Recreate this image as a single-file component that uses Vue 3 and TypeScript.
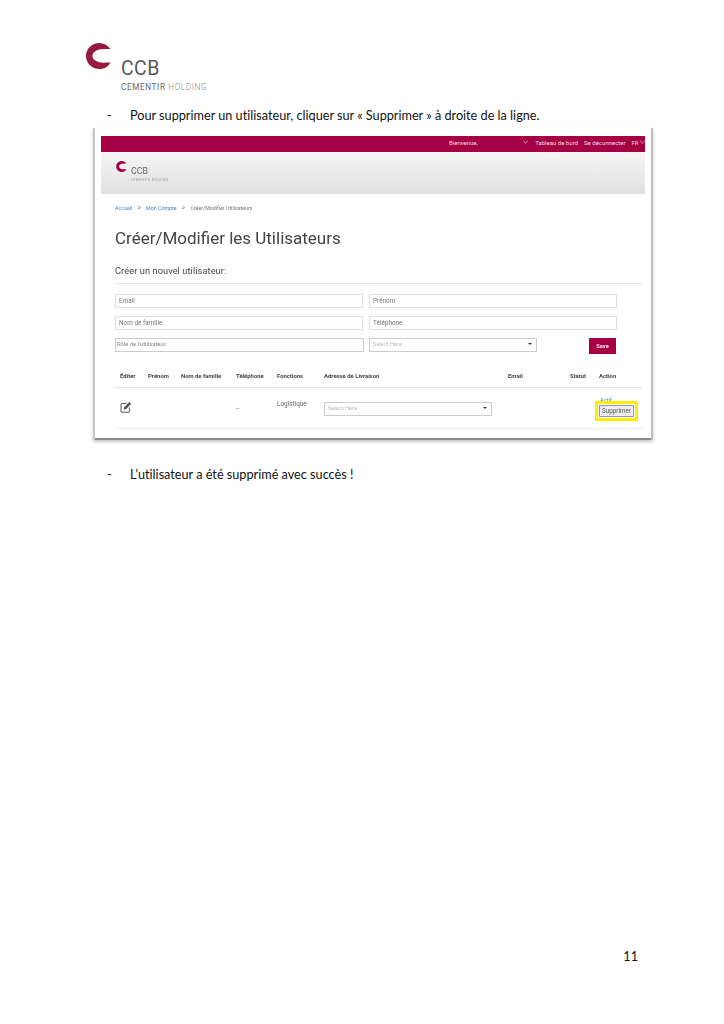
<script setup lang="ts">
const headers: [string, number][] = [
  ['Éditer', 28], ['Prénom', 33], ['Nom de famille', 55], ['Téléphone', 41], ['Fonctions', 47],
  ['Adresse de Livraison', 184], ['Email', 62], ['Statut', 29], ['Action', 43],
]
const columns = headers.map((h) => h[1] + 'px').join(' ')
const markPath = 'M24.5 6C21.5 2 17.5 0 13.5 0 5.800 0 0 5.800 0 13c0 7.200 5.800 13 13.500 13 4.500 0 8.500-2 11-6.500-3 0-6.500.5-9.500 0C10.500 18.800 6.500 16.500 6.500 13c0-3.500 3.500-6 8.500-6.700 3-.3 6.500-.3 9.500-.3z'
</script>

<template>
  <div class="page">
    <header class="brand">
      <svg class="mark" viewBox="0 0 25 26" aria-hidden="true"><path :d="markPath" /></svg>
      <div class="brand-text">
        <div class="brand-name">CCB</div>
        <div class="brand-sub"><b>CEMENTIR</b> HOLDING</div>
      </div>
    </header>

    <p class="bullet first"><span class="dash">-</span>Pour supprimer un utilisateur, cliquer sur « Supprimer » à droite de la ligne.</p>

    <section class="shot">
      <div class="topbar">
        <span class="welcome">Bienvenue,</span>
        <svg class="chev first-chev" viewBox="0 0 6 4"><path d="M.5.8 3 3.200 5.500.8" /></svg>
        <span class="nav">Tableau de bord</span>
        <span class="nav">Se déconnecter</span>
        <span class="nav">FR</span>
        <svg class="chev" viewBox="0 0 6 4"><path d="M.5.8 3 3.200 5.500.8" /></svg>
      </div>
      <div class="sitehead">
        <svg class="mini-mark" viewBox="0 0 25 26" aria-hidden="true"><path :d="markPath" /></svg>
        <div class="mini-text">
          <div class="mini-name">CCB</div>
          <div class="mini-sub">CEMENTIR HOLDING</div>
        </div>
      </div>

      <div class="content">
        <nav class="crumbs">
          <span class="crumb-link">Accueil</span><span class="sep">&gt;</span>
          <span class="crumb-link">Mon Compte</span><span class="sep">&gt;</span>
          <span>Créer/Modifier Utilisateurs</span>
        </nav>
        <h1>Créer/Modifier les Utilisateurs</h1>
        <h2>Créer un nouvel utilisateur:</h2>

        <div class="form">
          <div class="field">Email</div>
          <div class="field">Prénom</div>
          <div class="field">Nom de famille</div>
          <div class="field">Téléphone</div>
          <div class="form-last">
            <div class="field small wide">Rôle de l'utilisateur</div>
            <div class="field small select">Select Here<i class="caret"></i></div>
            <button class="save" type="button">Save</button>
          </div>
        </div>

        <div class="thead" :style="{ gridTemplateColumns: columns }">
          <span v-for="h in headers" :key="h[0]">{{ h[0] }}</span>
        </div>
        <div class="trow" :style="{ gridTemplateColumns: columns }">
          <svg class="edit" viewBox="0 0 14 14" aria-hidden="true">
            <path d="M11 7.500V12.300a.8.8 0 0 1-.8.8H2a.8.8 0 0 1-.8-.8V3.800A.8.8 0 0 1 2 3h5.500" />
            <path class="pen" d="M5.300 7.400 10.900 1.500l1.700 1.600-5.500 5.900-2.400.7z" />
          </svg>
          <span></span>
          <span></span>
          <span class="dashes">--</span>
          <span class="role">Logistique</span>
          <div class="field small row-select">Select Here<i class="caret"></i></div>
          <span></span>
          <span></span>
          <div class="action">
            <a class="active">Actif</a>
            <button class="del" type="button">Supprimer</button>
          </div>
        </div>
      </div>
    </section>

    <p class="bullet second"><span class="dash">-</span>L’utilisateur a été supprimé avec succès !</p>

    <footer class="pagenum">11</footer>
  </div>
</template>

<style>
html, body { margin: 0; background: #fff; }
</style>

<style scoped>
.page {
  width: 724px;
  height: 1024px;
  box-sizing: border-box;
  display: flex;
  flex-direction: column;
  background: #fff;
  font-family: Lato, "Open Sans", sans-serif;
  overflow: hidden;
}
.brand { display: flex; padding: 43px 0 0 86px; height: 52px; box-sizing: content-box; }
.mark { width: 25px; height: 26px; fill: #97193f; flex: none; }
.brand-text { margin: 16px 0 0 10px; color: #58595b; }
.brand-name { font: 400 19.500px/20px Roboto, sans-serif; letter-spacing: .4px; }
.brand-sub { font: 300 8.200px/11px Roboto, sans-serif; letter-spacing: .62px; color: #888; margin-top: 3px; white-space: nowrap; }
.brand-sub b { font-weight: 400; color: #666; }

.bullet {
  margin: 0;
  display: flex;
  font-size: 12.680px;
  line-height: 16px;
  color: #111;
  font-variant-ligatures: none;
}
.dash { width: 23px; margin-left: 107px; }
.first { margin-top: 12px; }
.second { margin-top: 26px; }

.shot {
  width: 544px;
  margin: 5px 0 0 93px;
  padding: 8px 8px 0;
  height: 304px;
  box-sizing: content-box;
  background: #fff;
  box-shadow: inset 2px 0 0 #c8c8c8, inset -2px 0 0 #bdbdbd, inset 0 -2px 0 #8c8c8c, 0 2px 3px rgba(0,0,0,.22);
  font-family: Roboto, sans-serif;
  filter: blur(.25px);
}
.topbar {
  height: 16px;
  box-sizing: border-box;
  padding-bottom: 4px;
  background: #a50044;
  color: #f4dce6;
  display: flex;
  align-items: center;
  font-size: 6px;
  font-weight: 400;
  white-space: nowrap;
}
.welcome { margin-left: 348px; }
.chev { width: 5px; height: 4px; flex: none; fill: none; stroke: #f4dce6; stroke-width: .9; margin-left: 1px; }
.first-chev { margin-left: 45.500px; margin-right: 2px; }
.nav { margin-left: 6px; }
.first-chev + .nav { margin-left: 5px; }
.sitehead {
  height: 42px;
  background: linear-gradient(#f6f6f6, #e0e0e0);
  display: flex;
  padding: 9px 0 0 15px;
  box-sizing: border-box;
}
.mini-mark { width: 11px; height: 11px; fill: #a50044; flex: none; }
.mini-text { margin: 5px 0 0 4px; color: #666; }
.mini-name { font: 400 8.800px/10px Roboto, sans-serif; letter-spacing: 0; }
.mini-sub { font: 400 3.100px/5px Roboto, sans-serif; letter-spacing: .55px; color: #999; margin-top: 2px; white-space: nowrap; }

.content { padding: 0 3px 0 14px; }
.crumbs { display: flex; align-items: center; height: 28px; font-size: 5.300px; color: #777; box-sizing: border-box; white-space: nowrap; }
.crumb-link { color: #4a82c0; }
.sep { margin: 0 5.200px; color: #777; font-size: 6.500px; }
h1 { margin: 6px 0 0; font: 400 17px/20px Roboto, sans-serif; color: #444; letter-spacing: 0; white-space: nowrap; }
h2 {
  margin: 16px 0 0;
  height: 19px;
  font: 400 9.200px/13px Roboto, sans-serif;
  color: #444;
  letter-spacing: .1px;
  border-bottom: 1px solid #e4e4e4;
}
.form { display: grid; grid-template-columns: 248px 248px; column-gap: 6px; row-gap: 8px; margin-top: 10px; }
.field {
  height: 14px;
  box-sizing: border-box;
  border: 1px solid #dedede;
  font-size: 6.400px;
  line-height: 13px;
  color: #777;
  padding-left: 3px;
  background: #fff;
  white-space: nowrap;
}
.field.small { font-size: 5.700px; line-height: 11px; color: #bbb; position: relative; }
.form-last { grid-column: 1 / 3; display: flex; align-items: flex-start; }
.wide { width: 249px; color: #888 !important; border-color: #ccc; padding-left: 1px; font-size: 5.800px !important; }
.select { width: 168px; margin-left: 5px; border-color: #ccc; }
.caret {
  position: absolute;
  right: 4px;
  top: 4px;
  border: 2.200px solid transparent;
  border-top: 2.600px solid #333;
  border-bottom: 0;
}
.save {
  width: 27px;
  height: 16px;
  margin-left: 52px;
  padding: 0;
  border: 0;
  background: #a50044;
  color: #f8e6ee;
  font: 700 5.700px Roboto, sans-serif;
}
.thead {
  display: grid;
  margin-top: 16px;
  height: 17px;
  padding-left: 5px;
  width: 522px;
  border-bottom: 1px solid #e2e2e2;
  font-size: 5.900px;
  font-weight: 700;
  line-height: 12px;
  color: #444;
  white-space: nowrap;
}
.trow {
  display: grid;
  height: 40px;
  padding-left: 5px;
  width: 522px;
  border-bottom: 1px solid #eee;
  color: #666;
  position: relative;
}
.edit { width: 12px; height: 12px; fill: none; stroke: #333; stroke-width: 1; margin-top: 13px; margin-left: -.5px; }
.pen { fill: #555; stroke-width: .6; }
.dashes { font-size: 6px; margin-top: 16px; }
.role { font-size: 6.400px; margin-top: 12px; }
.row-select { width: 168px; margin-top: 14px; padding-left: 3px; border-color: #ccc; }
.action { position: relative; margin-top: 9px; }
.active { display: block; font-size: 5.800px; line-height: 6px; color: #3f8be0; margin-left: 1px; }
.del {
  display: block;
  position: absolute;
  left: 0;
  top: 8px;
  width: 35px;
  height: 12px;
  padding: 0;
  background: #eee;
  border: 1px solid #999;
  color: #555;
  font: 400 6.300px Roboto, sans-serif;
  outline: 3px solid #ffee00;
  outline-offset: 1px;
}
.pagenum {
  margin-top: auto;
  padding: 0 86px 59px 0;
  text-align: right;
  font-size: 12.650px;
  line-height: 16px;
  color: #111;
}
</style>
